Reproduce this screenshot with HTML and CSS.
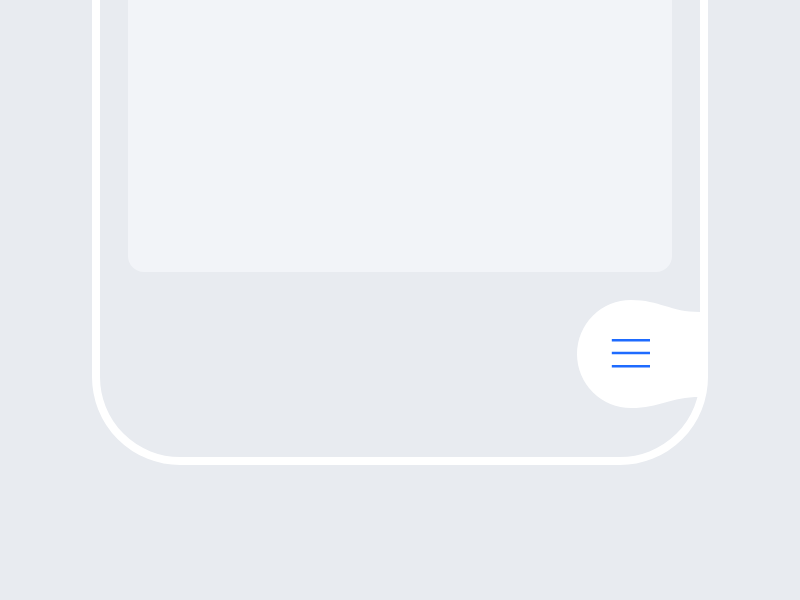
FILE: index.html
```html
<!DOCTYPE html>
<html>
<head>
<meta charset="utf-8">
<link rel="stylesheet" href="styles.css">
</head>
<body>
<div class="phone">
  <div class="card"></div>
  <button class="menu-fab" aria-label="Menu">
    <svg width="130" height="120" viewBox="0 0 130 120">
      <path d="M130 17 C100 17 90 5 61 5 A54 54 0 0 0 61 113 C90 113 100 102 130 102 Z" fill="#ffffff"/>
      <g stroke="#1e6bff" stroke-width="2.6" stroke-linecap="butt">
        <line x1="41.8" y1="45.3" x2="80" y2="45.3"/>
        <line x1="41.8" y1="58" x2="80" y2="58"/>
        <line x1="41.8" y1="71.3" x2="80" y2="71.3"/>
      </g>
    </svg>
  </button>
</div>
</body>
</html>
```
FILE: styles.css
```css
html, body {
  margin: 0;
  padding: 0;
  height: 100%;
  overflow: hidden;
}
body {
  background: #e8ebf0;
  font-family: "Noto Sans", sans-serif;
}
.phone {
  position: relative;
  box-sizing: border-box;
  width: 616px;
  height: 600px;
  margin: -135px auto 0;
  border: 8px solid #ffffff;
  border-radius: 88px;
  padding: 27px 28px 0;
  background: #e8ebf0;
}
.card {
  height: 372px;
  border-radius: 16px;
  background: #f2f4f8;
}
.menu-fab {
  position: absolute;
  left: 470px;
  top: 422px;
  width: 130px;
  height: 120px;
  padding: 0;
  border: 0;
  background: none;
  display: block;
}
.menu-fab svg {
  display: block;
}
```
